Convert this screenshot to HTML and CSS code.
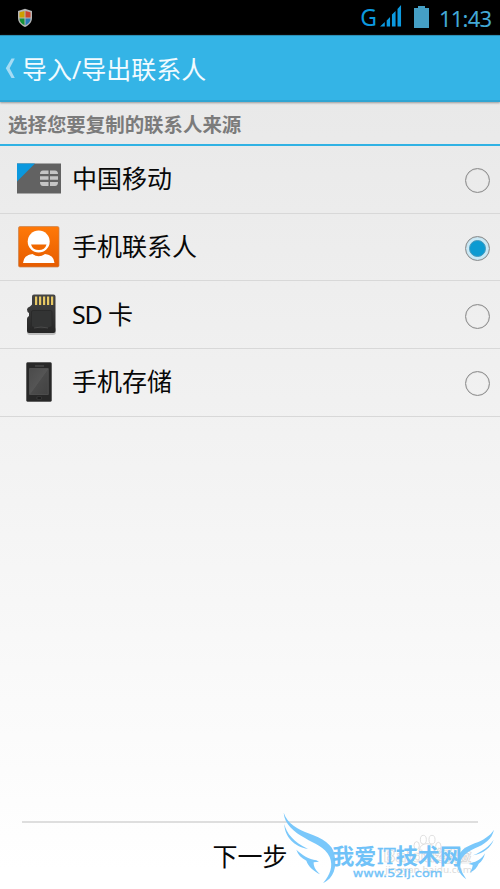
FILE: index.html
```html
<!DOCTYPE html>
<html lang="zh-CN">
<head>
<meta charset="utf-8">
<title>导入/导出联系人</title>
<link rel="stylesheet" href="styles.css">
</head>
<body>
<div class="screen">
  <div class="status">
    <svg class="shield" width="16" height="20" viewBox="0 0 16 20"><path d="M8 .8 15 3v7c0 5-4 7.500-7 9-3-1.500-7-4-7-9V3z" fill="#b5b5b5"/><path d="M2.500 4.200 7.500 3v6.500h-5z" fill="#cda000"/><path d="m8.500 3 5 1.200v5.300h-5z" fill="#cc432d"/><path d="M2.500 10.500h5v6.800c-3-1.600-5-3.500-5-6.800z" fill="#159236"/><path d="M8.500 10.500h5c0 3.300-2 5.200-5 6.800z" fill="#287bb9"/></svg>
    <div class="indicators">
      <span class="net">G</span>
      <svg class="signal" width="22" height="22" viewBox="0 0 23 22" preserveAspectRatio="none" fill="#0c99df"><path d="M0 21.500 5 17v4.500zM7 15.500l3.500-3.500v9.500H7zM12.500 9.500 16.300 6v15.500h-3.800zM18.300 4 22 0v21.500h-3.700z"/></svg>
      <svg class="battery" width="15" height="22" viewBox="0 0 15 22"><path d="M0 2h4V0h7v2h4v20H0z" fill="#459fc5"/></svg>
      <span class="clock">11:43</span>
    </div>
  </div>
  <header class="bar">
    <svg class="back" width="11" height="21" viewBox="0 0 11 21"><path d="M6.500.5h3.300L4.700 10.300l5.100 9.700H6.500L.8 10.300z" fill="#a6dcf4"/></svg>
    <h1>导入/导出联系人</h1>
  </header>
  <h2 class="section">选择您要复制的联系人来源</h2>
  <ul class="sources">
    <li>
      <svg class="icon" width="46" height="46" viewBox="0 0 46 46"><path d="M1 7.500h44v30H1z" fill="#626262"/><path d="M1 7.500h18L1 25.500z" fill="#0b98de"/><g fill="#c5c5c5"><path d="M27 14.500h5.500V18H24q0-3.500 3-3.500zM34 14.500h5q3 0 3 3.500h-8zM24 20.200h8.500v3.500H24zM34 20.200h8v3.500h-8zM24 26h8.500v4H27q-3 0-3-4zM34 26h8q0 4-3 4h-5z"/></g></svg>
      <span class="label">中国移动</span><span class="radio"></span>
    </li>
    <li>
      <svg class="icon" width="46" height="46" viewBox="0 0 46 46"><defs><linearGradient id="orange" x2="0" y2="1"><stop stop-color="#ff7908"/><stop offset="1" stop-color="#e65c00"/></linearGradient></defs><rect x="2.500" y="2.500" width="40.500" height="40.500" rx="1.500" fill="url(#orange)" stroke="#c9824e" stroke-width=".7"/><ellipse cx="22.700" cy="17.500" rx="11" ry="11" fill="#fff"/><path d="M15 20.500h15.500q-1.500 5.500-7.700 5.500T15 20.500z" fill="#f06800"/><path d="M7 39q.5-8 9.500-9 6.200 4.500 12.500 0 9 1 9.500 9z" fill="#fff"/></svg>
      <span class="label">手机联系人</span><span class="radio selected"></span>
    </li>
    <li>
      <svg class="icon" width="46" height="46" viewBox="0 0 46 46"><defs><linearGradient id="card" x2="0" y2="1"><stop stop-color="#454545"/><stop offset="1" stop-color="#252525"/></linearGradient></defs><rect x="11" y="35" width="29" height="8" rx="3" fill="#bdbdbd"/><path d="M18 2.500h19.500q2 0 2 2v34.500q0 2-2 2H13q-2 0-2-2V27q0-2 2-3v-3q-2-1-2-3.500 0-2 3-3l2-2V4.500q0-2 2-2z" fill="url(#card)"/><path d="M19 4.500h2.200V13H19zM23 4.500h2.200V13H23zM27 4.500h2.200V13H27zM31 4.500h2.200V13H31zM35 4.500h2.200V13H35z" fill="#e6c763"/><path d="M15.500 34.500V20q0-1.500 1.500-1.500h17.500q1.500 0 1.500 1.500v14.500q-10 5-20.500 0z" fill="#333434" stroke="#282828" stroke-width=".8"/><path d="M18 36q7-2 14 0" stroke="#484848" fill="none"/></svg>
      <span class="label"><span class="narrow">SD</span> 卡</span><span class="radio"></span>
    </li>
    <li>
      <svg class="icon" width="46" height="46" viewBox="0 0 46 46"><defs><linearGradient id="glass" x2="1" y2="1"><stop stop-color="#4b4b4b"/><stop offset=".5" stop-color="#555"/><stop offset=".52" stop-color="#4b4b4b"/><stop offset="1" stop-color="#424242"/></linearGradient></defs><rect x="10.500" y="3.500" width="25" height="39" rx="1.200" fill="#282828" stroke="#444" stroke-width=".6"/><path d="M19 7h9" stroke="#555"/><path d="M13.500 9.500h18.800v26H13.500z" fill="url(#glass)" stroke="#5c5c5c" stroke-width=".6"/><rect x="21" y="38" width="4.500" height="2" fill="#111" stroke="#4b4b4b" stroke-width=".5"/></svg>
      <span class="label">手机存储</span><span class="radio"></span>
    </li>
  </ul>
  <footer class="next">下一步</footer>
  <svg class="watermark" width="230" height="89" viewBox="0 0 690 267">
    <g fill="#fff" stroke="#d8d8d8" stroke-width="2.500"><ellipse cx="471" cy="148" rx="22" ry="17"/><ellipse cx="440" cy="137" rx="8" ry="12"/><ellipse cx="460" cy="119" rx="9" ry="13"/><ellipse cx="486" cy="119" rx="9" ry="13"/><ellipse cx="505" cy="139" rx="8" ry="12"/></g>
    <text class="ghost-name" x="340" y="186" textLength="264" lengthAdjust="spacingAndGlyphs">Baidu经验</text>
    <text class="ghost-url" x="346" y="220" textLength="260" lengthAdjust="spacingAndGlyphs">jingyan.baidu.com</text>
    <g fill="#7ac8fb">
      <path d="M41 38C53 72 84 88 115 100 158 115 188 134 193 163c9 39-2 72-34 87 22-27 31-52 20-79-13-30-48-40-73-56C71 95 43 72 41 38z"/>
      <path d="M43 72c6 28 28 54 71 75-41-7-70-36-71-75z"/>
      <path d="M79 149c18 17 37 28 60 32l8 4-16 2c-1 15 9 27 19 36-18-9-35-23-41-41-15-8-25-18-30-33z"/>
      <path d="M672 89c-7 31-29 43-57 56-25 11-42 26-44 45-2 20 10 34 18 48-22-16-34-40-25-65 7-24 27-34 50-43 25-9 46-22 58-41z"/>
      <path d="M671 119c-9 24-30 41-62 47 27-12 49-26 62-47z"/>
      <path d="M645 160c-10 17-24 25-42 29l-7 3 12 3c-1 9-4 16-9 23 14-6 22-15 27-27 10-7 16-17 19-31z"/>
    </g>
    <text class="wm-name" x="187" y="193" textLength="132" lengthAdjust="spacingAndGlyphs">我爱</text>
    <text class="wm-name latin" x="320" y="193" textLength="57" lengthAdjust="spacingAndGlyphs">IT</text>
    <text class="wm-name" x="377" y="193" textLength="198" lengthAdjust="spacingAndGlyphs">技术网</text>
    <text class="wm-url" x="248" y="232" textLength="269" lengthAdjust="spacingAndGlyphs">www.52ij.com</text>
  </svg>
</div>
</body>
</html>
```
FILE: styles.css
```css
* { box-sizing: border-box; }
body { margin: 0; font-family: "Noto Sans", "Noto Sans CJK SC", sans-serif; }
.screen {
  position: relative;
  display: flex;
  flex-direction: column;
  width: 500px;
  height: 889px;
  overflow: hidden;
  background: linear-gradient(#e9e9e9 100px, #f1f1f1 400px, #fff 870px);
}
.status {
  flex: none;
  display: flex;
  justify-content: space-between;
  height: 35px;
  padding: 0 8px 0 17px;
  background: #000;
}
.shield { margin-top: 8px; }
.indicators { display: flex; align-items: flex-start; }
.net { margin: 1px 3px 0 0; color: #0c99df; font-size: 23px; line-height: 32px; }
.signal { margin-top: 5px; }
.battery { margin: 6px 10px 0 12px; }
.clock { width: 53px; color: #43a9d6; font-size: 22px; letter-spacing: -.8px; line-height: 36px; white-space: nowrap; }
.bar {
  flex: none;
  display: flex;
  align-items: center;
  height: 67px;
  padding-left: 5px;
  background: #34b4e6;
  border-top: 1px solid #2b8fb5;
  border-bottom: 2px solid #30a5d3;
  box-shadow: 0 1px 2px #999;
}
.bar h1 { margin: 1px 0 0 6px; color: #f2fbff; font-size: 25px; font-weight: 400; line-height: 36px; }
.section {
  flex: none;
  height: 44px;
  margin: 0;
  padding-left: 8px;
  border-bottom: 2px solid #31b2e4;
  color: #7b7b7b;
  font-size: 19.450px;
  font-weight: 700;
  line-height: 45px;
}
.sources { flex: none; margin: 0; padding: 0; list-style: none; }
.sources li {
  display: flex;
  align-items: center;
  height: 67.700px;
  padding: 0 10px 0 16px;
  border-bottom: 1px solid #d8d8d8;
}
.label { flex: 1; margin: -2px 0 0 10px; color: #080808; font-size: 25px; line-height: 36px; }
.narrow { letter-spacing: -1.200px; }
.radio {
  display: grid;
  place-items: center;
  width: 25px;
  height: 25px;
  margin-top: 3px;
  border: 1.500px solid #8c8c8c;
  border-radius: 50%;
  box-shadow: inset 0 0 1px #999;
}
.selected { background: #c9e9f6; }
.selected::after {
  content: "";
  width: 15px;
  height: 15px;
  border: 1px solid #4b9abc;
  border-radius: 50%;
  background: #0c9bd2;
}
.next {
  height: 68px;
  margin: auto 22px 0;
  border-top: 2px solid #dedede;
  color: #080808;
  font-size: 25px;
  line-height: 67px;
  text-align: center;
}
.watermark { position: absolute; right: 0; bottom: 0; }
.ghost-name { fill: #fff; stroke: #d6d6d6; stroke-width: 2px; font-size: 48px; font-weight: 700; }
.ghost-url { fill: #dcdcdc; font-size: 28px; }
.wm-name { fill: #70c2f8; font-family: "Noto Sans CJK SC", sans-serif; font-size: 65px; font-weight: 700; }
.wm-name.latin { font-family: "DejaVu Serif", serif; font-weight: 400; stroke: #70c2f8; stroke-width: 1px; }
.wm-url { fill: #72c3f8; stroke: #72c3f8; stroke-width: 1px; font-family: "DejaVu Sans", sans-serif; font-size: 31px; }
```
